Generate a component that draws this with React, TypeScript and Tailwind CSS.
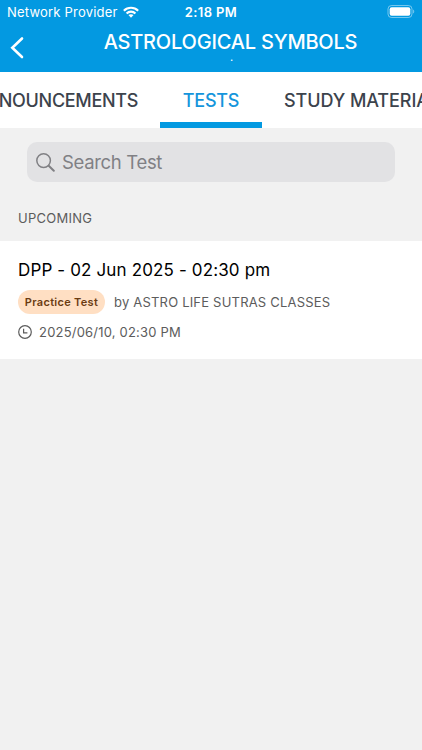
import { clsx } from 'clsx'

const tabs = [
  { label: 'ANNOUNCEMENTS', active: false, box: 'w-[160px] justify-end pr-[22px]', text: 'tracking-[-0.32px]' },
  { label: 'TESTS', active: true, box: 'w-[102px] justify-center', text: 'tracking-[-0.25px]' },
  { label: 'STUDY MATERIAL', active: false, box: 'w-[160px] justify-start pl-[22px]', text: 'tracking-[-0.08px]' },
]

const tests = [
  {
    title: 'DPP - 02 Jun 2025 - 02:30 pm',
    type: 'Practice Test',
    author: 'by ASTRO LIFE SUTRAS CLASSES',
    date: '2025/06/10, 02:30 PM',
  },
]

function WifiIcon() {
  return (
    <svg width="16" height="12" viewBox="0 0 17 12" fill="none" stroke="currentColor" strokeWidth="2.3">
      <path d="M0.9 4.6C5.1 0.4 11.9 0.4 16.1 4.6" />
      <path d="M3.8 7.6C6.4 5 10.6 5 13.2 7.6" />
      <path d="M8.5 12L5.8 9.3C7.4 8 9.6 8 11.2 9.3Z" fill="currentColor" stroke="none" />
    </svg>
  )
}

function BatteryIcon() {
  return (
    <svg width="28" height="13" viewBox="0 0 28 13" fill="none">
      <rect x="1" y="0.5" width="24" height="12" rx="3.5" stroke="white" strokeOpacity="0.45" />
      <rect x="2.7" y="2.2" width="20.6" height="8.6" rx="2" fill="white" />
      <path d="M26.2 4.5C27.6 5.1 27.6 7.9 26.2 8.5Z" fill="white" fillOpacity="0.5" />
    </svg>
  )
}

function SearchIcon() {
  return (
    <svg width="19" height="19" viewBox="0 0 19 19" fill="none" stroke="currentColor" strokeLinecap="round">
      <circle cx="7.6" cy="7.6" r="6.8" strokeWidth="1.5" />
      <path d="M12.7 12.7L17.8 17.8" strokeWidth="2" />
    </svg>
  )
}

function ClockIcon() {
  return (
    <svg width="14" height="14" viewBox="0 0 14 14" fill="none" stroke="currentColor" strokeWidth="1.2">
      <circle cx="7" cy="7" r="6.3" />
      <path d="M5.6 3.8V7.8H9.4" />
    </svg>
  )
}

function Header() {
  return (
    <header className="h-[72px] shrink-0 bg-[#0399e1] text-white">
      <div className="grid h-[23px] grid-cols-[1fr_auto_1fr] items-center pl-[7px] pr-[7px]">
        <div className="flex items-center gap-[5px]">
          <span className="whitespace-nowrap text-[13px] leading-4 tracking-[0.2px]">Network Provider</span>
          <WifiIcon />
        </div>
        <span className="text-[13px] font-semibold leading-4 tracking-[0.4px]">2:18 PM</span>
        <div className="flex justify-end">
          <BatteryIcon />
        </div>
      </div>
      <div className="flex h-[49px] items-start">
        <button aria-label="Back" className="ml-[10px] mt-[13px]">
          <svg width="14" height="23" viewBox="0 0 14 23" fill="none" stroke="currentColor" strokeWidth="2.6" strokeLinecap="round">
            <path d="M12 2.5L2.3 11.8L12 21" />
          </svg>
        </button>
        <div className="ml-[15px] flex-1 text-center">
          <h1 className="mt-[8px] whitespace-nowrap text-[20px] font-medium leading-[22px] tracking-[-0.2px]">ASTROLOGICAL SYMBOLS</h1>
          <p className="pl-[2px] text-[11px] leading-[9px]">.</p>
        </div>
      </div>
    </header>
  )
}

export default function App() {
  return (
    <div className="flex h-[750px] w-[422px] flex-col overflow-hidden bg-[#f1f1f1] font-['Inter','Liberation_Sans',sans-serif]">
      <Header />

      <nav className="flex h-14 shrink-0 overflow-hidden bg-white">
        {tabs.map(tab => (
          <button
            key={tab.label}
            className={clsx(
              'flex shrink-0 items-center border-b-[6px] pt-[7px] text-[18px] font-medium leading-6',
              tab.box,
              tab.active ? 'border-[#0399e1] text-[#1495dc]' : 'border-transparent text-[#3c434c]'
            )}
          >
            <span className={clsx('whitespace-nowrap', tab.text)}>{tab.label}</span>
          </button>
        ))}
      </nav>

      <main>
        <div className="mx-[27px] mt-[14px] flex h-10 items-center gap-[7px] rounded-[10px] bg-[#e2e2e4] pl-[9px] text-[#808084]">
          <SearchIcon />
          <span className="text-[18.5px] leading-6 tracking-[-0.33px]">Search Test</span>
        </div>

        <h2 className="mt-[26px] pl-[18px] text-[13px] leading-5 tracking-[0.25px] text-[#5c5c5c]">UPCOMING</h2>

        {/* Test list */}
        <ul className="mt-[13px]">
          {tests.map(test => (
            <li key={test.title} className="h-[118px] bg-white pl-[18px] pt-[17px] text-[#5c5c5c]">
              <p className="text-[17px] leading-6 tracking-[0.14px] text-black">{test.title}</p>
              <div className="mt-2 flex items-center">
                <span className="flex h-6 w-[87px] items-center justify-center rounded-full bg-[#ffdfc3] text-[11px] font-semibold tracking-[0.3px] text-[#6b3c12]">
                  {test.type}
                </span>
                <span className="ml-[9px] text-[13px] leading-5 tracking-[0.2px]">{test.author}</span>
              </div>
              <div className="mt-2 flex items-center gap-[7px]">
                <ClockIcon />
                <span className="text-[13px] leading-5 tracking-[0.2px]">{test.date}</span>
              </div>
            </li>
          ))}
        </ul>
      </main>
    </div>
  )
}
